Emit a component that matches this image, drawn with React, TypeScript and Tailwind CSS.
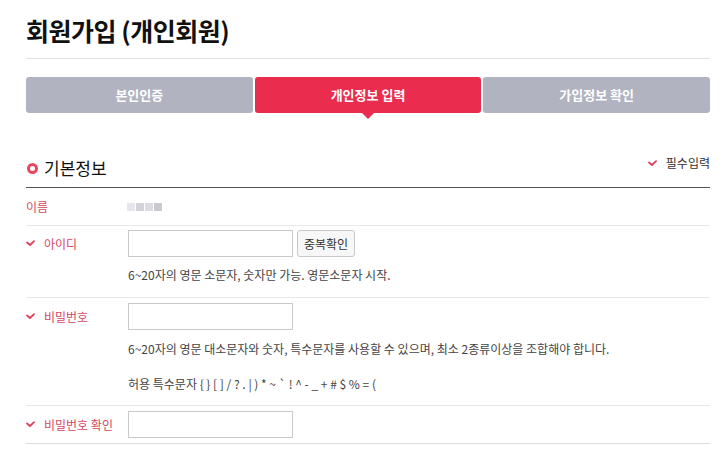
import React from "react";

const font = { fontFamily: '"Noto Sans CJK KR", "Noto Sans", sans-serif' };

function Check() {
  return (
    <svg width="9" height="7" viewBox="0 0 9 7" className="shrink-0">
      <path d="M1 2.5 L4 5 L8 1.2" fill="none" stroke="#e0405c" strokeWidth="1.8" strokeLinecap="round" strokeLinejoin="round" />
    </svg>
  );
}

function Label({ text, required = true }: { text: string; required?: boolean }) {
  return (
    <div className="w-[102px] shrink-0 flex items-center gap-[9px] h-[27px] text-[12px] text-[#d4475f]">
      {required && <Check />}
      <span>{text}</span>
    </div>
  );
}

function Input() {
  return <input className="w-[165px] h-[27px] border border-[#c9c9c9] bg-white outline-none" />;
}

export default function App() {
  const tabs = ["본인인증", "개인정보 입력", "가입정보 확인"];
  return (
    <div className="bg-white w-[725px] h-[461px] overflow-hidden px-[26px] pt-[13px]" style={font}>
      <h1 className="text-[25px] leading-[34px] font-bold text-[#111] tracking-[-0.5px]">회원가입 (개인회원)</h1>
      <div className="mt-[11px] border-t border-[#e3e3e3] w-[684px]" />

      {/* steps */}
      <div className="mt-[18px] flex gap-[2px] w-[684px]">
        {tabs.map((t, i) => (
          <div
            key={t}
            className={`relative flex-1 h-[36px] rounded-[3px] flex items-center justify-center text-[13px] font-bold text-white ${
              i === 1 ? "bg-[#ea2c4f]" : "bg-[#b1b3c0]"
            }`}
          >
            {t}
            {i === 1 && (
              <span className="absolute left-1/2 -translate-x-1/2 top-full w-0 h-0 border-l-[6px] border-r-[6px] border-t-[6px] border-l-transparent border-r-transparent border-t-[#ea2c4f]" />
            )}
          </div>
        ))}
      </div>

      {/* section header */}
      <div className="mt-[37px] w-[684px] h-[38px] flex items-start justify-between border-b border-[#555]">
        <div className="flex items-center gap-[6px] pt-[5px]">
          <span className="w-[11px] h-[11px] rounded-full border-[3px] border-[#e6485f] bg-white ml-[1px]" />
          <span className="text-[17px] leading-[26px] text-[#111]">기본정보</span>
        </div>
        <div className="flex items-center gap-[9px] text-[12px] leading-[18px] text-[#333] pt-[4px]">
          <Check />
          <span>필수입력</span>
        </div>
      </div>

      {/* rows */}
      <div className="w-[684px] text-[12px] text-[#444]">
        <div className="flex items-center h-[38px] border-b border-[#e8e8e8]">
          <Label text="이름" required={false} />
          <div className="flex gap-[1px] ml-[-1px]">
            <span className="w-[8px] h-[8px] bg-[#e6e6ea] blur-[0.6px]" />
            <span className="w-[8px] h-[8px] bg-[#d2d2d8] blur-[0.6px]" />
            <span className="w-[8px] h-[8px] bg-[#dcdce2] blur-[0.6px]" />
            <span className="w-[8px] h-[8px] bg-[#c9c9cf] blur-[0.6px]" />
          </div>
        </div>

        <div className="flex pt-[4px] h-[72px] border-b border-[#e8e8e8]">
          <Label text="아이디" />
          <div>
            <div className="flex gap-[4px]">
              <Input />
              <button className="h-[27px] w-[58px] border border-[#c9c9c9] rounded-[3px] bg-[#f7f7f7] text-[12px] text-[#333]">중복확인</button>
            </div>
            <p className="mt-[9px] leading-[18px]">6~20자의 영문 소문자, 숫자만 가능. 영문소문자 시작.</p>
          </div>
        </div>

        <div className="flex pt-[5px] h-[108px] border-b border-[#e8e8e8]">
          <Label text="비밀번호" />
          <div>
            <Input />
            <p className="mt-[10px] leading-[18px]">6~20자의 영문 대소문자와 숫자, 특수문자를 사용할 수 있으며, 최소 2종류이상을 조합해야 합니다.</p>
            <p className="mt-[17px] leading-[18px]">허용 특수문자 {"{ } [ ] / ? . | ) * ~ ` ! ^ - _ + # $ % = ("}</p>
          </div>
        </div>

        <div className="flex items-center h-[38px] border-b border-[#dcdcdc]">
          <Label text="비밀번호 확인" />
          <Input />
        </div>
      </div>
    </div>
  );
}
